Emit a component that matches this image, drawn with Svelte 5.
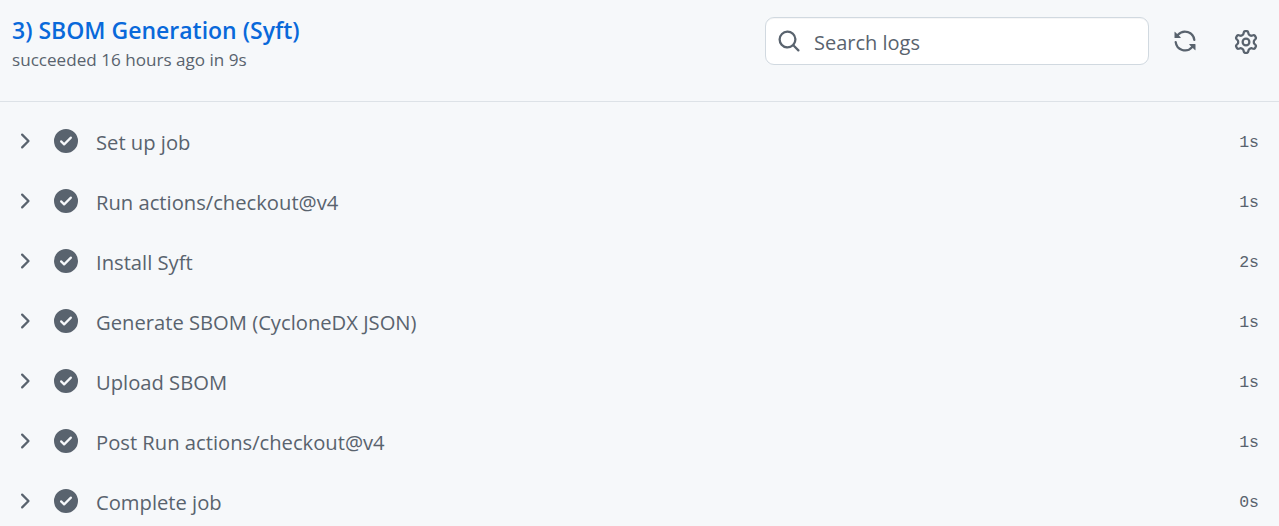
<script>
  const steps = [
    { name: "Set up job", time: "1s" },
    { name: "Run actions/checkout@v4", time: "1s" },
    { name: "Install Syft", time: "2s" },
    { name: "Generate SBOM (CycloneDX JSON)", time: "1s" },
    { name: "Upload SBOM", time: "1s" },
    { name: "Post Run actions/checkout@v4", time: "1s" },
    { name: "Complete job", time: "0s" },
  ];
</script>

<div class="job">
  <header class="head">
    <div class="titles">
      <h1 class="title">3) SBOM Generation (Syft)</h1>
      <div class="sub">succeeded 16 hours ago in 9s</div>
    </div>
    <label class="search">
      <svg class="ico" viewBox="0 0 16 16" width="24" height="24" fill="currentColor"><path d="M10.68 11.74a6 6 0 0 1-7.922-8.982 6 6 0 0 1 8.982 7.922l3.04 3.04a.749.749 0 0 1-.326 1.275.749.749 0 0 1-.734-.215ZM11.5 7a4.499 4.499 0 1 0-8.997 0A4.499 4.499 0 0 0 11.5 7Z"/></svg>
      <input placeholder="Search logs" />
    </label>
    <button class="icon-btn sync" aria-label="Refresh">
      <svg viewBox="0 0 16 16" width="24" height="24" fill="currentColor"><path d="M1.705 8.005a.75.75 0 0 1 .834.656 5.5 5.5 0 0 0 9.592 2.97l-1.204-1.204a.25.25 0 0 1 .177-.427h3.646a.25.25 0 0 1 .25.25v3.646a.25.25 0 0 1-.427.177l-1.38-1.38A7.002 7.002 0 0 1 1.05 8.84a.75.75 0 0 1 .656-.834ZM8 2.5a5.487 5.487 0 0 0-4.131 1.869l1.204 1.204A.25.25 0 0 1 4.896 6H1.25A.25.25 0 0 1 1 5.75V2.104a.25.25 0 0 1 .427-.177l1.38 1.38A7.002 7.002 0 0 1 14.95 7.16a.75.75 0 0 1-1.49.178A5.5 5.5 0 0 0 8 2.5Z"/></svg>
    </button>
    <button class="icon-btn gear" aria-label="Settings">
      <svg viewBox="0 0 16 16" width="24" height="24" fill="currentColor"><path d="M8 0a8.2 8.2 0 0 1 .701.031C9.444.095 9.99.645 10.16 1.29l.288 1.107c.018.066.079.158.212.224.231.114.454.243.668.386.123.082.233.09.299.071l1.103-.303c.644-.176 1.392.021 1.82.63.27.385.506.792.704 1.218.315.675.111 1.422-.364 1.891l-.814.806c-.049.048-.098.147-.088.294.016.257.016.515 0 .772-.01.147.038.246.088.294l.814.806c.475.469.679 1.216.364 1.891a7.977 7.977 0 0 1-.704 1.217c-.428.61-1.176.807-1.82.63l-1.102-.302c-.067-.019-.177-.011-.3.071a5.909 5.909 0 0 1-.668.386c-.133.066-.194.158-.211.224l-.29 1.106c-.168.646-.715 1.196-1.458 1.26a8.006 8.006 0 0 1-1.402 0c-.743-.064-1.289-.614-1.458-1.26l-.289-1.106c-.018-.066-.079-.158-.212-.224a5.738 5.738 0 0 1-.668-.386c-.123-.082-.233-.09-.299-.071l-1.103.303c-.644.176-1.392-.021-1.82-.63a8.12 8.12 0 0 1-.704-1.218c-.315-.675-.111-1.422.363-1.891l.815-.806c.05-.048.098-.147.088-.294a6.214 6.214 0 0 1 0-.772c.01-.147-.038-.246-.088-.294l-.815-.806C.635 6.045.431 5.298.746 4.623a7.92 7.92 0 0 1 .704-1.217c.428-.61 1.176-.807 1.82-.63l1.102.302c.067.019.177.011.3-.071.214-.143.437-.272.668-.386.133-.066.194-.158.211-.224l.29-1.106C6.009.645 6.556.095 7.299.03 7.53.01 7.764 0 8 0Zm-.571 1.525c-.036.003-.108.036-.137.146l-.289 1.105c-.147.561-.549.967-.998 1.189-.173.086-.34.183-.5.29-.417.278-.97.423-1.529.27l-1.103-.303c-.109-.03-.175.016-.195.045-.22.312-.412.644-.573.99-.014.031-.021.11.059.19l.815.806c.411.406.562.957.53 1.456a4.709 4.709 0 0 0 0 .582c.032.499-.119 1.05-.53 1.456l-.815.806c-.081.08-.073.159-.059.19.162.346.353.677.573.989.02.03.085.076.195.046l1.102-.303c.56-.153 1.113-.008 1.53.27.161.107.328.204.501.29.447.222.85.629.997 1.189l.289 1.105c.029.109.101.143.137.146a6.6 6.6 0 0 0 1.142 0c.036-.003.108-.036.137-.146l.289-1.105c.147-.561.549-.967.998-1.189.173-.086.34-.183.5-.29.417-.278.97-.423 1.529-.27l1.103.303c.109.029.175-.016.195-.045.22-.313.411-.644.573-.99.014-.031.021-.11-.059-.19l-.815-.806c-.411-.406-.562-.957-.53-1.456a4.709 4.709 0 0 0 0-.582c-.032-.499.119-1.05.53-1.456l.815-.806c.081-.08.073-.159.059-.19a6.464 6.464 0 0 0-.573-.989c-.02-.03-.085-.076-.195-.046l-1.102.303c-.56.153-1.113.008-1.53-.27a4.44 4.44 0 0 0-.501-.29c-.447-.222-.85-.629-.997-1.189l-.289-1.105c-.029-.11-.101-.143-.137-.146a6.6 6.6 0 0 0-1.142 0ZM11 8a3 3 0 1 1-6 0 3 3 0 0 1 6 0ZM9.5 8a1.5 1.5 0 1 0-3.001.001A1.5 1.5 0 0 0 9.5 8Z"/></svg>
    </button>
  </header>

  <div class="steps">
    {#each steps as step}
      <div class="step">
        <svg class="chev" viewBox="0 0 16 16" width="24" height="24" fill="currentColor"><path d="M6.22 3.22a.75.75 0 0 1 1.06 0l4.25 4.25a.75.75 0 0 1 0 1.06l-4.25 4.25a.751.751 0 0 1-1.042-.018.751.751 0 0 1-.018-1.042L9.94 8 6.22 4.28a.75.75 0 0 1 0-1.06Z"/></svg>
        <svg class="check" viewBox="0 0 16 16" width="24" height="24" fill="currentColor"><path d="M8 16A8 8 0 1 1 8 0a8 8 0 0 1 0 16Zm3.78-9.72a.751.751 0 0 0-.018-1.042.751.751 0 0 0-1.042-.018L6.75 9.19 5.28 7.72a.751.751 0 0 0-1.042.018.751.751 0 0 0-.018 1.042l2 2a.75.75 0 0 0 1.06 0Z"/></svg>
        <span class="name">{step.name}</span>
        <span class="time">{step.time}</span>
      </div>
    {/each}
  </div>
</div>

<style>
  :global(body) {
    background: #f6f8fa;
    font-family: "Open Sans", "Noto Sans", sans-serif;
    color: #59636e;
    overflow: hidden;
  }
  .job {
    height: 526px;
    overflow: hidden;
  }
  .head {
    height: 102px;
    box-sizing: border-box;
    display: flex;
    align-items: flex-start;
    padding: 17px 21px 0 12px;
    border-bottom: 1px solid #dde2e7;
  }
  .titles {
    flex: 1;
    min-width: 0;
  }
  .title {
    margin: 0;
    font-size: 23px;
    line-height: 26px;
    font-weight: 600;
    color: #0969da;
  }
  .sub {
    margin-top: 5px;
    font-size: 17.1px;
    line-height: 24px;
  }
  .search {
    width: 384px;
    height: 48px;
    box-sizing: border-box;
    display: flex;
    align-items: center;
    gap: 13px;
    padding: 0 11px;
    margin-right: 1px;
    background: #fff;
    border: 1px solid #d1d9e0;
    border-radius: 9px;
    box-shadow: inset 0 1px 0 rgba(31, 35, 40, 0.04);
  }
  .search input {
    flex: 1;
    min-width: 0;
    border: 0;
    outline: 0;
    padding: 2px 0 0;
    background: transparent;
    font: inherit;
    font-size: 20px;
    color: #59636e;
  }
  .search input::placeholder {
    color: #59636e;
    opacity: 1;
  }
  .ico {
    flex: none;
  }
  .icon-btn {
    flex: none;
    width: 24px;
    height: 24px;
    padding: 0;
    border: 0;
    background: none;
    color: #59636e;
    display: block;
  }
  .sync {
    margin: 12px 0 0 23px;
  }
  .gear {
    margin: 13px 0 0 37px;
  }
  .steps {
    padding-top: 10px;
  }
  .step {
    height: 60px;
    display: flex;
    align-items: center;
    padding: 0 20px 0 12px;
  }
  .chev {
    flex: none;
    margin-bottom: 2px;
  }
  .check {
    flex: none;
    margin-left: 18px;
    margin-bottom: 2px;
  }
  .name {
    flex: 1;
    margin-left: 18px;
    font-size: 20.2px;
  }
  .time {
    font-family: "Liberation Mono", monospace;
    font-size: 16.5px;
  }
</style>
